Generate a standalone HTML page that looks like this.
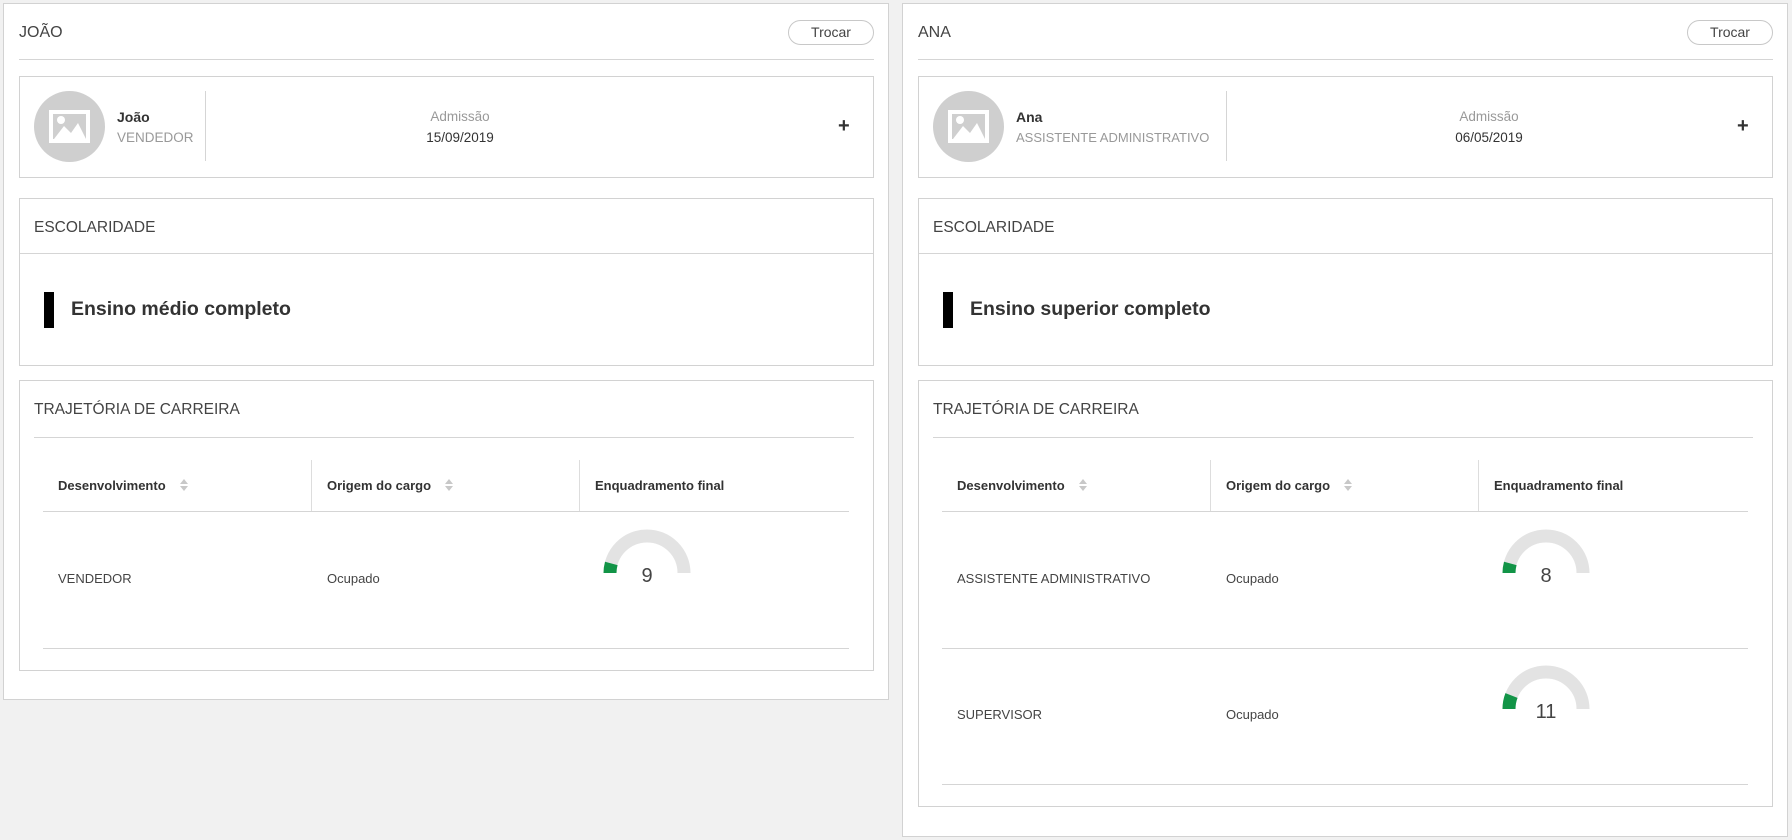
<!DOCTYPE html>
<html><head><meta charset="utf-8">
<style>
*{box-sizing:border-box;margin:0;padding:0}
body{width:1792px;height:840px;background:#f1f1f1;font-family:"Liberation Sans",sans-serif;color:#333;position:relative;overflow:hidden}
.abs{position:absolute}
.panel{position:absolute;top:3px;width:886px;background:#fff;border:1px solid #d2d2d2}
.title{left:15px;top:20px;font-size:16px;color:#444}
.btn{left:784px;top:16px;width:86px;height:25px;border:1px solid #c8c8c8;border-radius:13px;font-size:14px;color:#444;text-align:center;line-height:23px}
.hline{height:1px;background:#d5d5d5}
.card{position:absolute;left:15px;width:855px;border:1px solid #d2d2d2;background:#fff}
.small{font-size:13.5px}
.th{position:absolute;top:0;height:51px;line-height:51px;font-size:13px;font-weight:bold;color:#333;padding-left:15px;white-space:nowrap}
.sort{display:inline-block;margin-left:14px;vertical-align:middle;width:8px;height:12px;position:relative;top:-2px}
.sort svg{display:block}
.td{position:absolute;font-size:13px;color:#444;white-space:nowrap}
.gnum{position:absolute;font-size:20px;color:#444;width:60px;text-align:center}
</style></head><body>

<!-- LEFT PANEL -->
<div class="panel" style="left:3px;height:697px">
  <div class="abs title">JOÃO</div>
  <div class="abs btn">Trocar</div>
  <div class="abs hline" style="left:15px;top:55px;width:855px"></div>
  <div class="card" style="top:72px;height:102px">
    <div class="abs" style="left:14px;top:14px;width:71px;height:71px;border-radius:50%;background:#cfcfcf">
      <svg width="71" height="71" viewBox="0 0 71 71"><rect x="17" y="21" width="37" height="29" fill="none" stroke="#fff" stroke-width="4"/><path d="M20 48 L30 35 L37 42 L44 32 L52 48 Z" fill="#fff"/><circle cx="27" cy="29" r="4" fill="#fff"/></svg>
    </div>
    <div class="abs" style="left:97px;top:32px;font-size:14px;font-weight:bold">João</div>
    <div class="abs small" style="left:97px;top:53px;color:#999">VENDEDOR</div>
    <div class="abs" style="left:185px;top:14px;width:1px;height:70px;background:#d5d5d5"></div>
    <div class="abs small" style="left:380px;top:32px;width:120px;text-align:center;color:#999">Admissão</div>
    <div class="abs small" style="left:380px;top:53px;width:120px;text-align:center">15/09/2019</div>
    <div class="abs" style="left:818px;top:38px;font-size:20px;font-weight:bold">+</div>
  </div>
  <div class="card" style="top:194px;height:168px">
    <div class="abs" style="left:14px;top:20px;font-size:15.5px;color:#444">ESCOLARIDADE</div>
    <div class="abs hline" style="left:0;top:54px;width:853px"></div>
    <div class="abs" style="left:24px;top:93px;width:10px;height:36px;background:#000"></div>
    <div class="abs" style="left:51px;top:99px;font-size:19.5px;font-weight:bold;color:#333">Ensino médio completo</div>
  </div>
  <div class="card" style="top:376px;height:291px">
    <div class="abs" style="left:14px;top:20px;font-size:15.5px;color:#444">TRAJETÓRIA DE CARREIRA</div>
    <div class="abs hline" style="left:14px;top:56px;width:820px"></div>
    <div class="abs" style="left:23px;top:79px;width:806px;height:190px">
      <div class="th" style="left:0;width:269px;border-right:1px solid #ddd">Desenvolvimento<span class="sort"><svg width="8" height="12"><path d="M0 5 L4 0 L8 5Z M0 7 L4 12 L8 7Z" fill="#c8c8c8"/></svg></span></div>
      <div class="th" style="left:269px;width:268px;border-right:1px solid #ddd">Origem do cargo<span class="sort"><svg width="8" height="12"><path d="M0 5 L4 0 L8 5Z M0 7 L4 12 L8 7Z" fill="#c8c8c8"/></svg></span></div>
      <div class="th" style="left:537px;width:269px">Enquadramento final</div>
      <div class="abs hline" style="left:0;top:51px;width:806px"></div>
      <div class="td" style="left:15px;top:111px">VENDEDOR</div>
      <div class="td" style="left:284px;top:111px">Ocupado</div>
      <svg class="abs" style="left:556px;top:66px" width="96" height="50" viewBox="0 0 96 50"><path d="M11 47 A37 37 0 0 1 85 47" fill="none" stroke="#e3e3e3" stroke-width="13"/><path d="M11 47 A37 37 0 0 1 12.3 37.4" fill="none" stroke="#129447" stroke-width="13"/></svg>
      <div class="gnum" style="left:574px;top:105px">9</div>
      <div class="abs hline" style="left:0;top:188px;width:806px"></div>
    </div>
  </div>
</div>

<!-- RIGHT PANEL -->
<div class="panel" style="left:902px;height:834px">
  <div class="abs title">ANA</div>
  <div class="abs btn">Trocar</div>
  <div class="abs hline" style="left:15px;top:55px;width:855px"></div>
  <div class="card" style="top:72px;height:102px">
    <div class="abs" style="left:14px;top:14px;width:71px;height:71px;border-radius:50%;background:#cfcfcf">
      <svg width="71" height="71" viewBox="0 0 71 71"><rect x="17" y="21" width="37" height="29" fill="none" stroke="#fff" stroke-width="4"/><path d="M20 48 L30 35 L37 42 L44 32 L52 48 Z" fill="#fff"/><circle cx="27" cy="29" r="4" fill="#fff"/></svg>
    </div>
    <div class="abs" style="left:97px;top:32px;font-size:14px;font-weight:bold">Ana</div>
    <div class="abs small" style="left:97px;top:53px;color:#999;font-size:13px">ASSISTENTE ADMINISTRATIVO</div>
    <div class="abs" style="left:307px;top:14px;width:1px;height:70px;background:#d5d5d5"></div>
    <div class="abs small" style="left:510px;top:32px;width:120px;text-align:center;color:#999">Admissão</div>
    <div class="abs small" style="left:510px;top:53px;width:120px;text-align:center">06/05/2019</div>
    <div class="abs" style="left:818px;top:38px;font-size:20px;font-weight:bold">+</div>
  </div>
  <div class="card" style="top:194px;height:168px">
    <div class="abs" style="left:14px;top:20px;font-size:15.5px;color:#444">ESCOLARIDADE</div>
    <div class="abs hline" style="left:0;top:54px;width:853px"></div>
    <div class="abs" style="left:24px;top:93px;width:10px;height:36px;background:#000"></div>
    <div class="abs" style="left:51px;top:99px;font-size:19.5px;font-weight:bold;color:#333">Ensino superior completo</div>
  </div>
  <div class="card" style="top:376px;height:427px">
    <div class="abs" style="left:14px;top:20px;font-size:15.5px;color:#444">TRAJETÓRIA DE CARREIRA</div>
    <div class="abs hline" style="left:14px;top:56px;width:820px"></div>
    <div class="abs" style="left:23px;top:79px;width:806px;height:330px">
      <div class="th" style="left:0;width:269px;border-right:1px solid #ddd">Desenvolvimento<span class="sort"><svg width="8" height="12"><path d="M0 5 L4 0 L8 5Z M0 7 L4 12 L8 7Z" fill="#c8c8c8"/></svg></span></div>
      <div class="th" style="left:269px;width:268px;border-right:1px solid #ddd">Origem do cargo<span class="sort"><svg width="8" height="12"><path d="M0 5 L4 0 L8 5Z M0 7 L4 12 L8 7Z" fill="#c8c8c8"/></svg></span></div>
      <div class="th" style="left:537px;width:269px">Enquadramento final</div>
      <div class="abs hline" style="left:0;top:51px;width:806px"></div>
      <div class="td" style="left:15px;top:111px">ASSISTENTE ADMINISTRATIVO</div>
      <div class="td" style="left:284px;top:111px">Ocupado</div>
      <svg class="abs" style="left:556px;top:66px" width="96" height="50" viewBox="0 0 96 50"><path d="M11 47 A37 37 0 0 1 85 47" fill="none" stroke="#e3e3e3" stroke-width="13"/><path d="M11 47 A37 37 0 0 1 12.3 37.4" fill="none" stroke="#129447" stroke-width="13"/></svg>
      <div class="gnum" style="left:574px;top:105px">8</div>
      <div class="abs hline" style="left:0;top:188px;width:806px"></div>
      <div class="td" style="left:15px;top:247px">SUPERVISOR</div>
      <div class="td" style="left:284px;top:247px">Ocupado</div>
      <svg class="abs" style="left:556px;top:202px" width="96" height="50" viewBox="0 0 96 50"><path d="M11 47 A37 37 0 0 1 85 47" fill="none" stroke="#e3e3e3" stroke-width="13"/><path d="M11 47 A37 37 0 0 1 13.5 33.5" fill="none" stroke="#129447" stroke-width="13"/></svg>
      <div class="gnum" style="left:574px;top:241px">11</div>
      <div class="abs hline" style="left:0;top:324px;width:806px"></div>
    </div>
  </div>
</div>

</body></html>
